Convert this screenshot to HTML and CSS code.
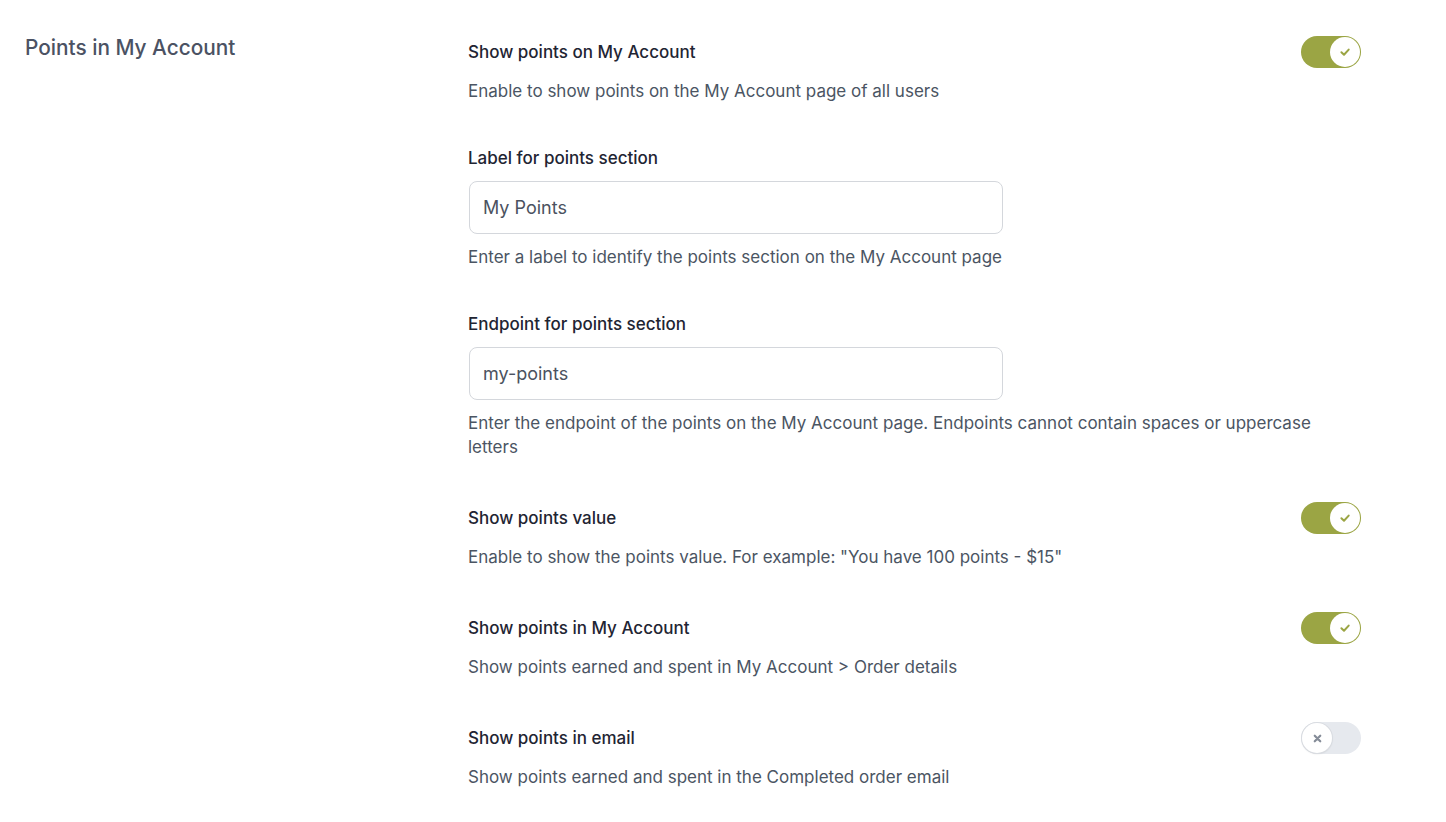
FILE: index.html
```html
<!DOCTYPE html>
<html lang="en">
<head>
<meta charset="utf-8">
<title>Points in My Account</title>
<link rel="stylesheet" href="styles.css">
</head>
<body>
<div class="page">
  <h2 class="section-title">Points in My Account</h2>
  <div class="settings">
    <div class="field">
      <div class="field-head">
        <span class="label">Show points on My Account</span>
        <span class="toggle on"><span class="knob"><svg viewBox="0 0 12 12" width="12" height="12"><path d="M2.4 6.2 L5 8.7 L9.7 3.6" fill="none" stroke="#9ba544" stroke-width="2" stroke-linecap="round" stroke-linejoin="round"/></svg></span></span>
      </div>
      <p class="desc">Enable to show points on the My Account page of all users</p>
    </div>

    <div class="field">
      <div class="label-line"><span class="label">Label for points section</span></div>
      <div class="input">My Points</div>
      <p class="desc">Enter a label to identify the points section on the My Account page</p>
    </div>

    <div class="field">
      <div class="label-line"><span class="label">Endpoint for points section</span></div>
      <div class="input">my-points</div>
      <p class="desc">Enter the endpoint of the points on the My Account page. Endpoints cannot contain spaces or uppercase letters</p>
    </div>

    <div class="field">
      <div class="field-head">
        <span class="label">Show points value</span>
        <span class="toggle on"><span class="knob"><svg viewBox="0 0 12 12" width="12" height="12"><path d="M2.4 6.2 L5 8.7 L9.7 3.6" fill="none" stroke="#9ba544" stroke-width="2" stroke-linecap="round" stroke-linejoin="round"/></svg></span></span>
      </div>
      <p class="desc">Enable to show the points value. For example: "You have 100 points - $15"</p>
    </div>

    <div class="field">
      <div class="field-head">
        <span class="label">Show points in My Account</span>
        <span class="toggle on"><span class="knob"><svg viewBox="0 0 12 12" width="12" height="12"><path d="M2.4 6.2 L5 8.7 L9.7 3.6" fill="none" stroke="#9ba544" stroke-width="2" stroke-linecap="round" stroke-linejoin="round"/></svg></span></span>
      </div>
      <p class="desc">Show points earned and spent in My Account &gt; Order details</p>
    </div>

    <div class="field">
      <div class="field-head">
        <span class="label">Show points in email</span>
        <span class="toggle off"><span class="knob"><svg viewBox="0 0 12 12" width="11" height="11"><path d="M3 3 L9 9 M9 3 L3 9" fill="none" stroke="#858c98" stroke-width="2.4" stroke-linecap="round"/></svg></span></span>
      </div>
      <p class="desc">Show points earned and spent in the Completed order email</p>
    </div>
  </div>
</div>
</body>
</html>
```

FILE: styles.css
```css
* { box-sizing: border-box; }
html, body {
  margin: 0;
  background: #ffffff;
  font-family: Inter, "Noto Sans", "Liberation Sans", sans-serif;
}
.page {
  display: grid;
  grid-template-columns: 443px 893px;
  padding: 36px 0 0 25px;
}
.section-title {
  margin: 0;
  font-size: 20.8px;
  line-height: 24px;
  font-weight: 500;
  color: #4b5263;
}
.settings {
  display: flex;
  flex-direction: column;
  gap: 43px;
}
.field {
  display: flex;
  flex-direction: column;
  gap: 11px;
}
.field-head {
  display: flex;
  align-items: center;
  justify-content: space-between;
  height: 32px;
}
.label-line {
  height: 24px;
  display: flex;
  align-items: center;
}
.label {
  font-size: 17px;
  line-height: 24px;
  font-weight: 500;
  color: #1f2533;
}
.desc {
  margin: 0;
  font-size: 17px;
  line-height: 24px;
  color: #4b5563;
}
.input {
  width: 534px;
  height: 53px;
  margin-left: 1px;
  border: 1px solid #d4d7dc;
  border-radius: 8px;
  padding: 0 13px;
  display: flex;
  align-items: center;
  font-size: 18px;
  color: #4b5260;
}
.toggle {
  width: 60px;
  height: 32px;
  border-radius: 16px;
  display: flex;
  align-items: center;
  padding: 0 1px;
}
.toggle.on {
  background: #9ba544;
  justify-content: flex-end;
}
.toggle.off {
  background: #e6e9ee;
  justify-content: flex-start;
}
.knob {
  width: 30px;
  height: 30px;
  border-radius: 50%;
  background: #ffffff;
  display: flex;
  align-items: center;
  justify-content: center;
}
.toggle.off .knob {
  box-shadow: 0 0 0 1px #d9dce1, 0 1px 2px rgba(0,0,0,0.12);
}
```
